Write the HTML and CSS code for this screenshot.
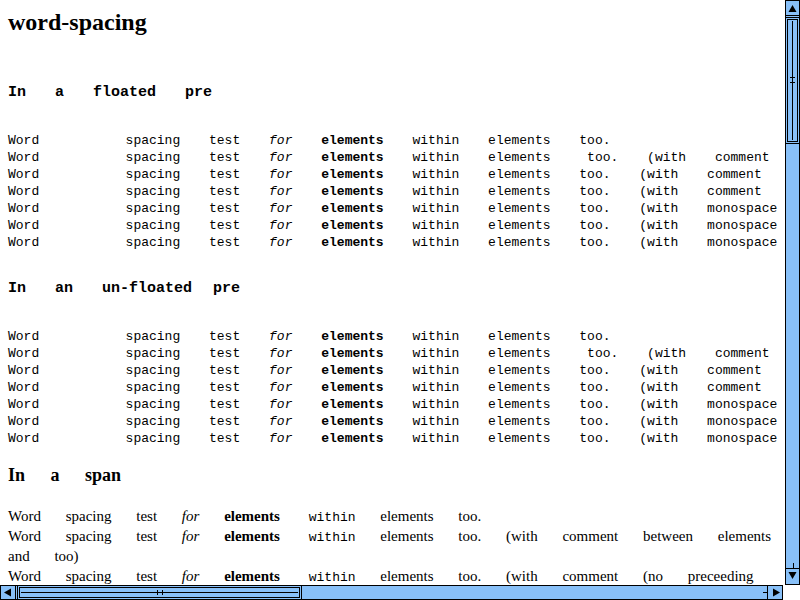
FILE: index.html
```html
<!DOCTYPE html>
<html>
<head>
<meta charset="utf-8">
<title>word-spacing</title>
<link rel="stylesheet" href="styles.css">
</head>
<body>
<div class="window">
  <div class="viewport">
    <h1 class="title">word-spacing</h1>
    <h2 class="mono-head">In a floated pre</h2>
    <pre class="ws-pre">Word   spacing test <em>for</em> <strong>elements</strong> within elements too.
Word   spacing test <em>for</em> <strong>elements</strong> within elements <span class="nows"> </span>too. (with comment between elements and too)
Word   spacing test <em>for</em> <strong>elements</strong> within elements too. (with comment (no preceeding space) between elements and too)
Word   spacing test <em>for</em> <strong>elements</strong> within elements too. (with comment (no trailing space) between elements and too)
Word   spacing test <em>for</em> <strong>elements</strong> within elements too. (with monospace font from elements to too)
Word   spacing test <em>for</em> <strong>elements</strong> within elements too. (with monospace font from elements to too, preceeding space)
Word   spacing test <em>for</em> <strong>elements</strong> within elements too. (with monospace font from elements to too, trailing space)</pre>
    <h2 class="mono-head after-pre">In an un-floated<span class="tight"> </span>pre</h2>
    <pre class="ws-pre">Word   spacing test <em>for</em> <strong>elements</strong> within elements too.
Word   spacing test <em>for</em> <strong>elements</strong> within elements <span class="nows"> </span>too. (with comment between elements and too)
Word   spacing test <em>for</em> <strong>elements</strong> within elements too. (with comment (no preceeding space) between elements and too)
Word   spacing test <em>for</em> <strong>elements</strong> within elements too. (with comment (no trailing space) between elements and too)
Word   spacing test <em>for</em> <strong>elements</strong> within elements too. (with monospace font from elements to too)
Word   spacing test <em>for</em> <strong>elements</strong> within elements too. (with monospace font from elements to too, preceeding space)
Word   spacing test <em>for</em> <strong>elements</strong> within elements too. (with monospace font from elements to too, trailing space)</pre>
    <h2 class="serif-head">In a span</h2>
    <div class="span-lines">
      <div class="ws-line">Word spacing test <em>for</em> <strong>elements</strong><tt> within</tt> elements too.</div>
      <div class="ws-line">Word spacing test <em>for</em> <strong>elements</strong><tt> within</tt> elements too. (with comment between elements and too)</div>
      <div class="ws-line">Word spacing test <em>for</em> <strong>elements</strong><tt> within</tt> elements too. (with comment (no preceeding space) between elements and too)</div>
      <div class="ws-line">Word spacing test <em>for</em> <strong>elements</strong><tt> within</tt> elements too. (with comment (no trailing space) between elements and too)</div>
    </div>
  </div>

  <div class="vbar">
    <div class="vbtn up">
      <svg width="13" height="14" viewBox="0 0 13 14"><polygon points="6.5,4 10.5,11 2.5,11" fill="#000"/></svg>
    </div>
    <div class="vthumb">
      <svg width="13" height="127" viewBox="0 0 13 127">
        <line x1="0" y1="0.5" x2="13" y2="0.5" stroke="#000"/>
        <line x1="0" y1="126.5" x2="13" y2="126.5" stroke="#000"/>
        <rect x="1.5" y="2.5" width="10" height="122" fill="none" stroke="#000"/>
        <line x1="6.5" y1="4" x2="6.5" y2="123" stroke="#000"/>
        <line x1="4" y1="60.5" x2="9" y2="60.5" stroke="#000"/>
        <line x1="4" y1="65.5" x2="9" y2="65.5" stroke="#000"/>
      </svg>
    </div>
    <div class="vtrack"><div class="vtick"></div></div>
    <div class="vbtn down">
      <svg width="13" height="15" viewBox="0 0 13 15"><polygon points="2.5,3 10.5,3 6.5,10" fill="#000"/></svg>
    </div>
  </div>

  <div class="hbar">
    <div class="hbtn left">
      <svg width="14" height="13" viewBox="0 0 14 13"><polygon points="3,6.5 10,2.5 10,10.5" fill="#000"/></svg>
    </div>
    <div class="hthumb">
      <svg width="285" height="13" viewBox="0 0 285 13">
        <line x1="0.5" y1="0" x2="0.5" y2="13" stroke="#000"/>
        <line x1="284.5" y1="0" x2="284.5" y2="13" stroke="#000"/>
        <rect x="2.5" y="1.5" width="280" height="10" fill="none" stroke="#000"/>
        <line x1="4" y1="6.5" x2="281" y2="6.5" stroke="#000"/>
        <line x1="140.5" y1="4" x2="140.5" y2="9" stroke="#000"/>
        <line x1="145.5" y1="4" x2="145.5" y2="9" stroke="#000"/>
      </svg>
    </div>
    <div class="htrack"><div class="htick"></div></div>
    <div class="hbtn right">
      <svg width="14" height="13" viewBox="0 0 14 13"><polygon points="5,2.5 12,6.5 5,10.5" fill="#000"/></svg>
    </div>
  </div>

  <div class="corner"></div>
</div>
</body>
</html>
```

FILE: styles.css
```css
html, body {
  margin: 0;
  padding: 0;
  background: #fff;
}

.window {
  display: grid;
  grid-template-columns: 785px 15px;
  grid-template-rows: 585px 15px;
  width: 800px;
  height: 600px;
  overflow: hidden;
}

.viewport {
  overflow: hidden;
  padding: 8px 8px 0 8px;
  font-family: "Liberation Serif", "Times New Roman", serif;
  font-size: 15px;
  color: #000;
  min-width: 0;
}

.title {
  font-size: 24px;
  line-height: 24px;
  font-weight: bold;
  padding-top: 2px;
  margin: 0 0 50px 0;
}

.mono-head {
  font-family: "Liberation Mono", "Courier New", monospace;
  font-size: 15px;
  line-height: 17px;
  font-weight: bold;
  word-spacing: 20px;
  margin: 0 0 31px 0;
}

.mono-head.after-pre {
  margin-top: 29px;
}

.tight {
  word-spacing: 12px;
}

.ws-pre {
  font-family: "Liberation Mono", "Courier New", monospace;
  font-size: 13px;
  line-height: 17px;
  word-spacing: 21px;
  margin: 0;
  white-space: pre;
}

.ws-pre em {
  font-style: italic;
}

.ws-pre strong {
  font-weight: bold;
}

.nows {
  word-spacing: 0;
}

.serif-head {
  font-family: "Liberation Serif", "Times New Roman", serif;
  font-size: 18px;
  line-height: 21px;
  font-weight: bold;
  word-spacing: 21px;
  margin: 18px 0 20px 0;
}

.span-lines {
  font-size: 15px;
  line-height: 20px;
}

.ws-line {
  word-spacing: 21px;
}

.ws-line tt {
  font-family: "Liberation Mono", "Courier New", monospace;
  font-size: 13px;
  line-height: 13px;
}

/* scrollbars */
.vbar {
  box-sizing: border-box;
  background: #88c0f8;
  border-left: 1px solid #000;
  border-right: 1px solid #000;
  border-bottom: 1px solid #000;
  display: flex;
  flex-direction: column;
}

.vbtn {
  flex: none;
  display: flex;
  background: #88c0f8;
}

.vbtn svg {
  display: block;
}

.vbtn.up {
  height: 16px;
  box-sizing: border-box;
  border-top: 1px solid #000;
  border-bottom: 1px solid #000;
}

.vbtn.down {
  height: 16px;
  box-sizing: border-box;
  border-top: 1px solid #000;
}

.vthumb {
  flex: none;
  margin-top: 1px;
  height: 127px;
}

.vthumb svg,
.hthumb svg {
  display: block;
}

.vtrack {
  flex: 1;
  display: flex;
  flex-direction: column;
  justify-content: flex-end;
}

.vtick {
  width: 1px;
  height: 5px;
  margin-left: 7px;
  background: #000;
}

.hbar {
  box-sizing: border-box;
  margin-right: 2px;
  background: #88c0f8;
  border-top: 1px solid #000;
  border-bottom: 1px solid #000;
  display: flex;
  flex-direction: row;
}

.hbtn {
  flex: none;
  width: 16px;
  box-sizing: border-box;
  border-left: 1px solid #000;
  border-right: 1px solid #000;
  display: flex;
}

.hbtn svg {
  display: block;
}

.hthumb {
  flex: none;
  margin-left: 1px;
  width: 285px;
}

.htrack {
  flex: 1;
  display: flex;
  justify-content: flex-end;
  align-items: center;
}

.htick {
  width: 4px;
  height: 1px;
  background: #000;
}

.corner {
  background: #fff;
}
```
